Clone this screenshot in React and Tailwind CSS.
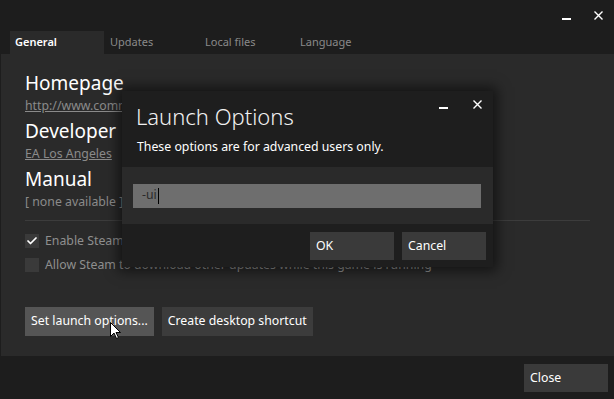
import { Check } from "lucide-react";

const font = { fontFamily: '"Noto Sans", "Open Sans", sans-serif' };

function WinControls({ className = "" }) {
  return (
    <div className={`flex items-start gap-[23px] ${className}`}>
      <span className="mt-[7px] block h-[2px] w-[9px] bg-white" />
      <svg width="9" height="9" viewBox="0 0 9 9" className="text-white">
        <path d="M0.5 0.5 L8.5 8.5 M8.5 0.5 L0.5 8.5" stroke="currentColor" strokeWidth="1.4" />
      </svg>
    </div>
  );
}

function CheckRow({ checked, children }) {
  return (
    <div className="flex h-[14px] items-center gap-[6px]">
      <span className="flex h-[14px] w-[14px] items-center justify-center bg-[#3a3a3a]">
        {checked && <Check size={12} strokeWidth={3.5} className="text-white" />}
      </span>
      <span className="text-[12.3px] leading-[14px] text-[#8f8f8f]">{children}</span>
    </div>
  );
}

export default function App() {
  return (
    <div className="relative flex h-[399px] w-[614px] flex-col overflow-hidden bg-[#1d1d1d] text-white" style={font}>
      {/* title bar */}
      <div className="flex h-[31px] justify-end pr-[11px] pt-[11px]">
        <WinControls />
      </div>

      {/* tabs */}
      <div className="flex h-[23px] pl-[10px] text-[11px]">
        <div className="flex w-[94px] items-center bg-[#2a2a2a] pl-[5px] font-semibold text-white">General</div>
        <div className="flex w-[95px] items-center pl-[6px] text-[#8a8a8a]">Updates</div>
        <div className="flex w-[95px] items-center pl-[6px] text-[#8a8a8a]">Local files</div>
        <div className="flex items-center pl-[6px] text-[#8a8a8a]">Language</div>
      </div>

      {/* content */}
      <div className="flex h-[302px] flex-col border-l border-[#1d1d1d] bg-[#2a2a2a] pl-[24px] pr-[24px] pt-[16px]">
        <div className="text-[19px] leading-[26px]">Homepage</div>
        <div className="text-[12.3px] leading-[20px] text-[#8a8a8a] underline">http://www.commandandconquer.com</div>
        <div className="mt-[2px] text-[19px] leading-[26px]">Developer</div>
        <div className="text-[12.3px] leading-[20px] text-[#8a8a8a] underline">EA Los Angeles</div>
        <div className="mt-[2px] text-[19px] leading-[26px]">Manual</div>
        <div className="text-[12.3px] leading-[20px] text-[#8a8a8a]">[ none available ]</div>
        <div className="mt-[8px] h-px bg-[#3c3c3c]" />
        <div className="mt-[13px] flex flex-col gap-[10px]">
          <CheckRow checked>Enable Steam Cloud synchronization for Command &amp; Conquer 3</CheckRow>
          <CheckRow>Allow Steam to download other updates while this game is running</CheckRow>
        </div>
        <div className="mt-[35px] flex gap-[8px] text-[12.3px]">
          <button className="h-[29px] bg-[#555555] px-[6px] text-white">Set launch options...</button>
          <button className="h-[29px] bg-[#3c3c3c] px-[6px] text-white">Create desktop shortcut</button>
        </div>
      </div>

      {/* footer */}
      <div className="flex flex-1 items-start justify-end pr-[6px] pt-[8px]">
        <button className="h-[28px] w-[84px] bg-[#3a3a3a] pl-[6px] text-left text-[12.3px] text-white">Close</button>
      </div>

      {/* mouse cursor */}
      <svg className="absolute left-[110px] top-[322px]" width="12" height="18" viewBox="0 0 12 18">
        <path d="M0.5 0.5 L0.5 14.5 L4 11 L6.5 16.5 L8.5 15.5 L6 10.5 L10.5 10.5 Z" fill="white" stroke="black" strokeWidth="1" />
      </svg>

      {/* launch options dialog */}
      <div className="absolute left-[122px] top-[91px] flex w-[371px] flex-col bg-[#1e1e1e] shadow-[0_0_12px_4px_rgba(0,0,0,0.55)]">
        <div className="relative h-[76px] px-[14px] pt-[9px]">
          <div className="text-[22px] font-light leading-[32px] text-[#f0f0f0]">Launch Options</div>
          <div className="mt-[6px] pl-[1px] text-[12.3px] leading-[18px]">These options are for advanced users only.</div>
          <WinControls className="absolute right-[11px] top-[9px] gap-[25px]" />
        </div>
        <div className="flex h-[57px] items-center bg-[#2a2a2a] px-[11px]">
          <div className="flex h-[24px] w-[348px] items-center bg-[#6e6e6e] pl-[9px] text-[12.3px] text-[#2a2a2a]">
            -ui<span className="ml-px h-[16px] w-px bg-black" />
          </div>
        </div>
        <div className="flex h-[43px] items-start justify-end gap-[8px] pr-[7px] pt-[8px] text-[12.3px]">
          <button className="h-[28px] w-[84px] bg-[#3a3a3a] pl-[6px] text-left text-white">OK</button>
          <button className="h-[28px] w-[84px] bg-[#3a3a3a] pl-[6px] text-left text-white">Cancel</button>
        </div>
      </div>
    </div>
  );
}
